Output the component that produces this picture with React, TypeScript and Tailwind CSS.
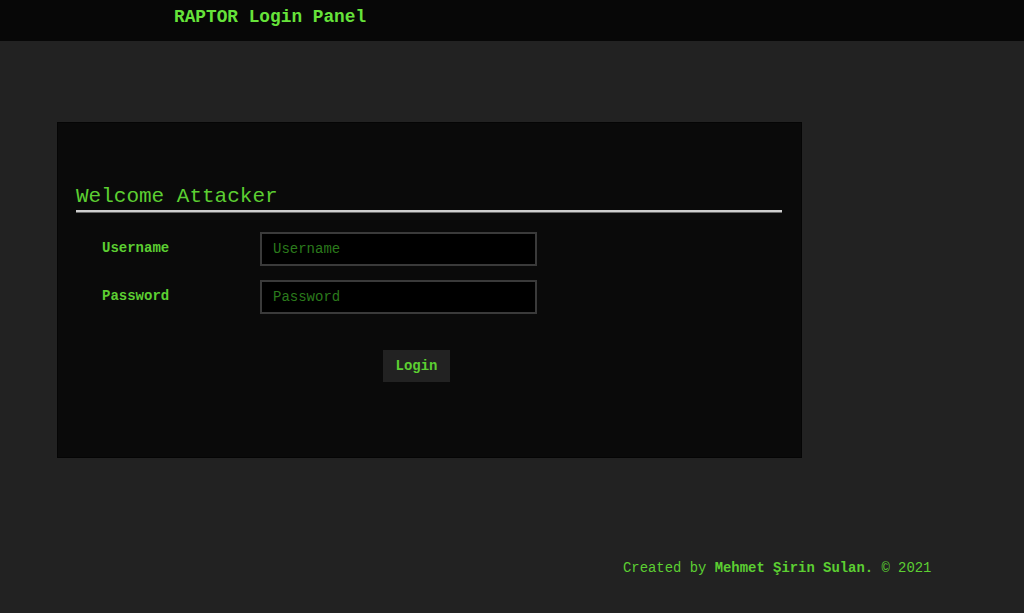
import React from "react";

const mono = "font-['Liberation_Mono','Courier_New',monospace]";

const Field = ({ label, type }: { label: string; type: string }) => {
  return (
    <div className="flex items-center h-[33px]">
      <label className="w-[184px] shrink-0 pl-[26px] text-[14px] font-bold text-[#5ccf32]">
        {label}
      </label>
      <input
        type={type}
        placeholder={label}
        className={`${mono} w-[277px] h-[34px] bg-black border-2 border-[#3a3a3a] px-[11px] text-[14px] text-[#5ccf32] placeholder:text-[#2b7a1c] outline-none`}
      />
    </div>
  );
};

export default function App() {
  return (
    <div className={`${mono} min-h-[613px] bg-[#222222] flex flex-col`}>
      {/* HEADER */}
      <div className="h-[41px] bg-[#070707] flex items-center pl-[174px] pb-[6px]">
        <span className="text-[17.8px] font-bold text-[#66e33a]">RAPTOR Login Panel</span>
      </div>

      {/* PANEL */}
      <div className="mt-[81px] ml-[57px] w-[745px] h-[336px] bg-[#0a0a0a] border border-[#050505] pt-[61px] px-[18px]">
        <h2 className="text-[21px] leading-[26px] text-[#5ccf32]">Welcome Attacker</h2>
        <div className="h-[3px] w-[706px] bg-[#cfcfcf] border-b border-[#6a6a6a]" />
        <div className="flex flex-col gap-[15px] mt-[19px]">
          <Field label="Username" type="text" />
          <Field label="Password" type="password" />
        </div>
        <div className="flex justify-center mt-[37px] pr-[26px]">
          <button className="w-[67px] h-[32px] bg-[#222222] text-[14px] font-bold text-[#5ccf32]">
            Login
          </button>
        </div>
      </div>

      {/* FOOTER */}
      <div className="mt-[100px] pl-[623px] text-[13.9px] text-[#5ccf32]">
        Created by <span className="font-bold">Mehmet Şirin Sulan.</span> © 2021
      </div>
    </div>
  );
}
